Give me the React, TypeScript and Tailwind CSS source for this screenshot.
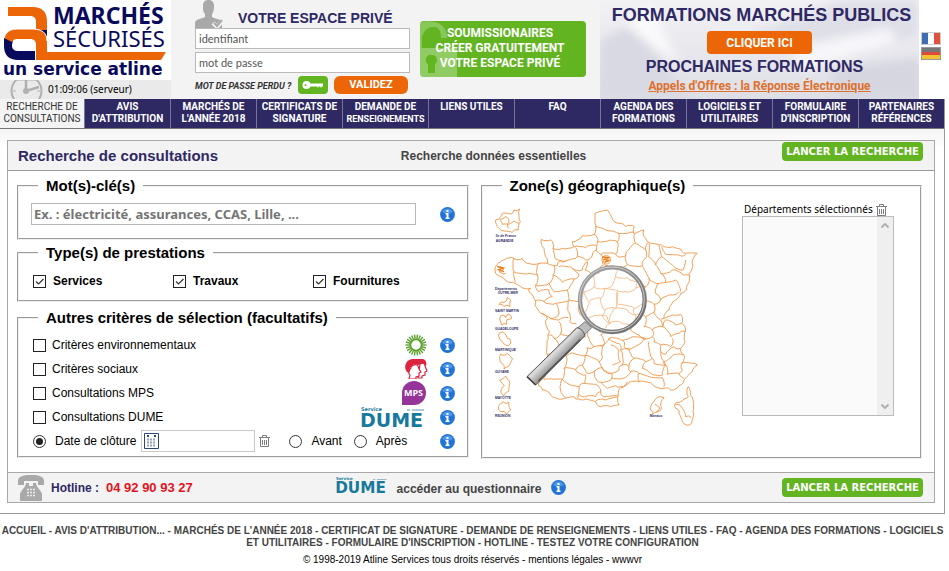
import React from 'react';

type Pt = [number, number];

const OUTLINE =
  '348,55 385,45 400,72 420,85 440,95 466,95 466,118 495,105 500,130 520,145 548,150 580,155 605,162 620,175 655,175 640,205 630,235 628,265 622,285 605,295 590,315 570,345 555,370 580,360 605,358 608,385 620,405 618,440 605,460 615,480 608,505 655,510 640,530 615,555 600,572 575,585 555,580 520,568 480,560 450,562 425,578 418,600 420,630 395,635 365,635 350,620 320,612 300,612 285,605 250,612 215,600 190,585 178,572 195,550 205,480 208,430 212,410 200,385 205,370 185,355 168,330 165,310 150,290 155,280 125,275 100,262 75,250 55,240 50,215 75,195 105,190 130,190 150,205 180,205 205,205 200,185 195,160 187,133 215,135 222,160 250,160 285,155 280,140 310,122 345,118 348,85 348,55';

const BORDERS = [
  '348,95 375,102 400,108 418,115 445,115 466,112',
  '345,118 356,140 385,138 415,140 418,115',
  '356,140 352,165 365,178 410,178 415,140',
  '285,155 320,158 352,152',
  '290,157 295,185 320,195 340,180 352,165',
  '466,118 470,145 500,165 508,142',
  '470,145 440,180 445,208 490,212 500,190 500,165',
  '365,178 370,205 400,212 425,215 445,208',
  '410,178 430,185 440,180',
  '370,188 390,184 392,202 374,204 370,188',
  '222,160 228,190 260,198 290,190 295,185',
  '205,205 235,212 245,198 260,198',
  '240,215 280,220 310,225 325,200',
  '105,190 105,230 150,235 175,240 180,205',
  '55,215 75,222 60,230 80,236',
  '105,230 110,262',
  '175,240 170,270 210,265 222,240 225,212',
  '222,240 250,262 285,252 300,240 280,220',
  '325,200 318,225 340,240 360,235 372,210',
  '340,240 345,275 375,280 400,270 410,245 425,215',
  '375,280 410,285 440,290 470,280 475,258 445,248 410,245',
  '490,212 510,250 500,275 470,280',
  '510,145 508,185 530,210 548,185 540,150',
  '548,185 585,215 612,225 620,195',
  '548,155 560,178 600,180 620,178',
  '530,210 545,235 580,225 612,240 630,240',
  '545,235 560,262 590,255 604,290',
  '510,250 540,265 560,262',
  '540,265 530,295 545,315 580,300 600,290',
  '500,275 498,320 525,328 545,315',
  '170,270 180,290 210,285 220,305 195,320 168,318',
  '210,265 225,290 265,285 285,252',
  '265,285 270,315 305,320 315,290 345,275',
  '270,315 268,350 272,380 292,385',
  '195,320 230,325 238,360 215,370 190,358',
  '230,325 268,318',
  '305,320 300,350 325,375 330,395',
  '315,290 330,320 365,310 375,280',
  '365,310 378,345 410,340 415,290',
  '330,320 318,350 325,375',
  '415,290 418,330 465,340 495,320 498,320',
  '378,345 370,360 392,385 400,352 410,340',
  '325,375 355,362 385,365 395,385 380,400',
  '410,340 445,345 470,360 460,385 425,382 392,385',
  '465,340 470,360 500,365 525,352 525,328',
  '525,352 545,375 555,370',
  '500,365 495,395 520,405 550,395 545,375',
  '212,370 240,375 268,368',
  '240,380 245,415 225,430 208,420',
  '245,415 275,420 290,400',
  '225,430 240,455 230,485 205,478',
  '240,455 262,460 290,440 320,425',
  '330,395 330,430 345,455 375,450 365,420 390,405',
  '460,385 455,405 480,420 500,432 520,425 520,405',
  '555,395 560,375 590,390 608,385',
  '550,395 575,425 600,415 620,410',
  '390,430 425,435 455,428 500,432',
  '365,455 390,430 420,445 425,465 450,462 490,440 500,432',
  '430,435 435,455 450,462 465,490 450,515 430,510 425,465',
  '262,460 262,485 285,475 318,482 325,458 345,455',
  '262,485 255,520 290,525 310,510 318,482',
  '375,450 370,485 360,500 370,520 395,535 420,525 430,510',
  '395,450 420,468 425,500 400,510',
  '318,482 360,500',
  '310,510 325,535 350,525 370,518 398,535 395,555 365,562 350,550 350,525',
  '195,553 225,553 250,553 255,520',
  '250,553 245,585 260,608',
  '250,553 275,570 300,575 295,610',
  '290,525 320,540 315,565 300,575',
  '315,565 350,568 365,590 350,605 320,605 300,598',
  '365,562 385,580 410,572 425,575 445,560',
  '365,590 375,605 415,600',
  '350,618 380,615 418,605',
  '398,548 430,550 455,530 450,515',
  '455,530 480,535 482,560',
  '465,490 500,500 520,490 510,440',
  '500,500 490,520 515,535 550,540 560,510 525,505 520,490',
  '480,535 510,545 550,548 555,575',
  '520,425 525,440 545,450 548,490 560,510',
  '545,450 575,455 580,430',
  '545,470 560,478 585,455 605,460',
  '560,510 555,500 580,482 612,480',
  '560,510 565,538 600,535 615,550',
  '608,505 610,525 600,535',
  // Corsica and the enlarged Paris area
  '628,575 634,600 642,615 642,650 632,690 610,680 600,655 590,640 592,622 615,612 628,605 628,575',
  '590,628 610,640 620,665 636,668',
  '50,75 70,55 95,58 105,45 122,42 124,80 118,105 100,112 75,108 60,100 50,75',
  '62,72 78,65 90,80 88,100',
  '62,72 70,88 88,88 105,78 120,85',
  // Overseas departments
  '60,328 75,322 85,308 95,315 93,335 75,335 60,328',
  '62,372 72,360 80,368 88,358 98,370 84,374 82,388 68,390 62,372',
  '60,415 72,410 85,430 95,440 88,452 70,440 60,415',
  '65,478 85,475 100,490 88,515 75,522 68,505 65,478',
  '62,555 80,543 92,558 88,590 75,602 66,585 76,572 62,555',
  '58,635 72,620 90,622 95,645 82,657 65,650 58,635',
  '515,645 525,620 545,605 555,608 545,630 540,650 522,658 515,645',
  '528,628 542,638 532,650',
];

/** Turns a coarse polyline into an irregular administrative border. */
function border(points: string): string {
  const pts = points.split(' ').map((p) => p.split(',').map(Number) as Pt);
  let d = `M${pts[0][0]} ${pts[0][1]}`;
  for (let i = 1; i < pts.length; i++) {
    const [ax, ay] = pts[i - 1];
    const [bx, by] = pts[i];
    const len = Math.hypot(bx - ax, by - ay) || 1;
    const steps = Math.max(1, Math.round(len / 7));
    for (let s = 1; s < steps; s++) {
      const t = s / steps;
      const n = Math.sin(ax * 12.9 + by * 78.2 + s * 37.7) * 4;
      d += `L${(ax + (bx - ax) * t - ((by - ay) / len) * n).toFixed(1)} ${(ay + (by - ay) * t + ((bx - ax) / len) * n).toFixed(1)}`;
    }
    d += `L${bx} ${by}`;
  }
  return d;
}

const MAP_LABELS: [number, number, string][] = [
  [50, 126, 'Ile de France'],
  [50, 141, 'AGRANDIE'],
  [48, 284, 'Départements'],
  [56, 298, 'OUTRE-MER'],
  [48, 350, 'SAINT MARTIN'],
  [48, 404, 'GUADELOUPE'],
  [48, 467, 'MARTINIQUE'],
  [48, 534, 'GUYANE'],
  [48, 611, 'MAYOTTE'],
  [48, 667, 'REUNION'],
  [512, 665, 'Monaco'],
];

function FranceMap() {
  return (
    <svg viewBox="45 36 615 660" className="h-[220px] w-[205px] shrink-0" role="img" aria-label="Carte des départements">
      <defs>
        <linearGradient id="handle" x1="0" y1="0" x2="1" y2="1">
          <stop offset="0.3" stopColor="#6f6f6f" />
          <stop offset="0.45" stopColor="#e0e0e0" />
          <stop offset="0.58" stopColor="#8b8b8b" />
          <stop offset="0.72" stopColor="#4f4f4f" />
        </linearGradient>
        <linearGradient id="ring" x1="0" y1="0" x2="1" y2="1">
          <stop offset="0" stopColor="#a5a5a5" />
          <stop offset="0.5" stopColor="#8a8a8a" />
          <stop offset="1" stopColor="#666" />
        </linearGradient>
      </defs>
      <g fill="none" stroke="#f0994a" strokeWidth="2.8" strokeLinejoin="round">
        <path d={border(OUTLINE)} />
        {BORDERS.map((b) => (
          <path key={b} d={border(b)} />
        ))}
      </g>
      <path d="M370 186l22 2-18 6 18 2-16 6M55 215l18 4-14 5 16 6" fill="none" stroke="#ee7a10" strokeWidth="4" />
      <g fill="#2f2a66" fontFamily="Liberation Sans, sans-serif" fontWeight="700" fontSize="10">
        {MAP_LABELS.map(([x, y, t]) => (
          <text key={t} x={x} y={y}>{t}</text>
        ))}
      </g>
      <circle cx="400" cy="314" r="94" fill="#fff" fillOpacity="0.35" />
      <path d="M318 380l20 18-22 22-22-20z" fill="#bdbdbd" stroke="#777" strokeWidth="3" />
      <path d="M294 398q18 4 24 24L170 570 144 545z" fill="url(#handle)" stroke="#555" strokeWidth="3" />
      <path d="M286 414L162 538" stroke="#d8d8d8" strokeWidth="5" />
      <path d="M304 434L178 558" stroke="#555" strokeWidth="5" />
      <path d="M144 545l26 25" stroke="#444" strokeWidth="5" />
      <circle cx="400" cy="314" r="97" fill="none" stroke="url(#ring)" strokeWidth="13" />
      <circle cx="399" cy="313" r="97" fill="none" stroke="#cfcfcf" strokeWidth="3" />
    </svg>
  );
}

function Logo() {
  return (
    <svg viewBox="0 0 171 80" className="block h-20 w-[171px]" role="img" aria-label="Marchés Sécurisés">
      <path d="M36 29h11v9c-2-4-6-7-11-8z" fill="#0a0a5c" />
      <path d="M4 38v8c0 9 5 14 14 14h17v-9H19c-5 0-7-2-7-6l1-5z" fill="#0a0a5c" />
      <path d="M8 7h25c9 0 14 5 14 14v9H36v-8c0-4-2-6-6-6H8z" fill="#ec6608" />
      <path d="M4 38c2-6 6-9 13-9h16c9 0 14 4 14 12v11h119l-5 8H36V45c0-4-2-6-6-6H18c-4 0-5 1-6 3z" fill="#ec6608" />
      <path d="M4 38c2-6 6-9 13-9h16c9 0 14 4 14 12" fill="none" stroke="#fff" strokeWidth="1" />
      <g fill="#0a0a5c">
        <text x="53" y="24" fontFamily="Noto Sans, sans-serif" fontWeight="700" fontSize="23">MARCHÉS</text>
        <text x="53" y="47" fontFamily="Noto Sans, sans-serif" fontWeight="400" fontSize="22">SÉCURISÉS</text>
        <text x="3" y="75" fontFamily="DejaVu Sans, sans-serif" fontWeight="700" fontSize="17">un service atline</text>
      </g>
    </svg>
  );
}

function Info() {
  return (
    <button type="button" aria-label="Information" className="block size-[15px] shrink-0">
      <svg viewBox="0 0 15 15" className="size-[15px]">
        <circle cx="7.500" cy="7.500" r="7.400" fill="#2173d6" />
        <path d="M2 5a6 6 0 0 1 11 0q-5 3-11 0z" fill="#4b95ea" />
        <path d="M6.500 3h2v2h-2zM5.500 6h3v4.500h1V12h-4v-1.500h1v-3h-1z" fill="#fff" />
      </svg>
    </button>
  );
}

function Trash() {
  return (
    <button type="button" aria-label="Effacer" className="block h-3 w-[11px] shrink-0">
      <svg viewBox="0 0 11 12" className="h-3 w-[11px]" fill="none" stroke="#7d7d7d">
        <path d="M0 2.500h11M3.500 2V.5h4V2M1.500 3v8.500h8V3M3.500 5v5M5.500 5v5M7.500 5v5" />
      </svg>
    </button>
  );
}

function Dume({ className }: { className: string }) {
  return (
    <svg viewBox="0 0 66 21" className={`overflow-visible ${className}`} role="img" aria-label="Service DUME">
      <g fill="#17799b" fontFamily="DejaVu Sans, sans-serif" fontWeight="700">
        <text x="0" y="4" fontSize="5">Service</text>
        <text x="-1" y="20" fontSize="19">DUME</text>
      </g>
      <path d="M46 3h3M51 3h12" stroke="#9ab9c9" strokeWidth="1.500" />
    </svg>
  );
}

function Check({ label, bold, checked }: { label: string; bold?: boolean; checked?: boolean }) {
  return (
    <label className={bold ? 'flex items-center gap-[7px] font-bold' : 'flex items-center gap-[6px]'}>
      <span className="grid size-[13px] shrink-0 place-items-center">
        <input
          type="checkbox"
          defaultChecked={checked}
          className="peer col-start-1 row-start-1 size-[13px] appearance-none border border-[#222] bg-white"
        />
        <svg viewBox="0 0 13 13" className="pointer-events-none col-start-1 row-start-1 size-[13px] opacity-0 peer-checked:opacity-100">
          <path d="M3 6.500l2.500 2.500L10.500 4" fill="none" stroke="#333" strokeWidth="1.200" />
        </svg>
      </span>
      {label}
    </label>
  );
}

function Radio({ label, checked, className }: { label: string; checked?: boolean; className: string }) {
  return (
    <label className={`flex items-center gap-[9px] whitespace-nowrap ${className}`}>
      <span className="grid size-[13px] shrink-0 place-items-center">
        <input
          type="radio"
          name="date"
          defaultChecked={checked}
          className="peer col-start-1 row-start-1 size-[13px] appearance-none rounded-full border border-[#333] bg-white"
        />
        <span className="pointer-events-none col-start-1 row-start-1 size-[7px] rounded-full bg-[#222] opacity-0 peer-checked:opacity-100" />
      </span>
      {label}
    </label>
  );
}

function Launch() {
  return (
    <button
      type="submit"
      className="h-[19px] w-[141px] shrink-0 whitespace-nowrap rounded bg-[#62b521] text-center font-['DejaVu_Sans',sans-serif] text-[10px] leading-[19px] font-bold text-white"
    >
      LANCER LA RECHERCHE
    </button>
  );
}

const NAV: [string, string][] = [
  ['RECHERCHE DE', 'CONSULTATIONS'],
  ['AVIS', "D'ATTRIBUTION"],
  ['MARCHÉS DE', "L'ANNÉE 2018"],
  ['CERTIFICATS DE', 'SIGNATURE'],
  ['DEMANDE DE', 'RENSEIGNEMENTS'],
  ['LIENS UTILES', ''],
  ['FAQ', ''],
  ['AGENDA DES', 'FORMATIONS'],
  ['LOGICIELS ET', 'UTILITAIRES'],
  ['FORMULAIRE', "D'INSCRIPTION"],
  ['PARTENAIRES', 'RÉFÉRENCES'],
];

const FOOTER = [
  'ACCUEIL',
  "AVIS D'ATTRIBUTION...",
  "MARCHÉS DE L'ANNÉE 2018",
  'CERTIFICAT DE SIGNATURE',
  'DEMANDE DE RENSEIGNEMENTS',
  'LIENS UTILES',
  'FAQ',
  'AGENDA DES FORMATIONS',
  'LOGICIELS ET UTILITAIRES',
  "FORMULAIRE D'INSCRIPTION",
  'HOTLINE',
  'TESTEZ VOTRE CONFIGURATION',
];

const FIELDSET = 'min-w-0 border-2 border-[#efefef] [border-style:groove]';
const LEGEND = 'ml-[19px] px-2 text-[15px] leading-[18px] font-bold text-black';
const LOGIN_INPUT =
  "h-[21px] w-[215px] border border-[#b9b9b9] bg-white px-[3px] font-['Lato',sans-serif] text-[11px] text-[#555] placeholder:text-[#555]";

function Header() {
  return (
    <header className="flex h-[99px] bg-white">
      <div className="w-[171px] shrink-0">
        <Logo />
        <div className="flex h-[19px] items-center gap-1 overflow-hidden bg-[#eaeaea] pl-[10px] font-['Noto_Sans',sans-serif] text-[10px] text-black">
          <svg viewBox="0 0 34 19" className="h-[19px] w-[34px]" fill="none" stroke="#b0b0b0" strokeWidth="2">
            <circle cx="16.500" cy="11" r="15" />
            <path d="M7 -1h20" strokeWidth="3" />
            <path d="M16 11l13-4M16 11V0" strokeWidth="2.500" />
            <circle cx="16" cy="11" r="2" fill="#b0b0b0" />
            <path d="M3 11h3M27 11h3" strokeWidth="1" />
          </svg>
          01:09:06 (serveur)
        </div>
      </div>

      <div className="flex min-w-0 flex-1 bg-[#f3f3f3] pl-6">
        <form className="w-[215px] shrink-0">
          <div className="flex h-7 items-end">
            <svg viewBox="0 0 28 28" className="h-7 w-7" fill="#a9a9a9">
              <path d="M8 6c0-4 2-6 5.500-6S19 2 19 6c0 5-1 7-2 8v3c3 2 10 2 10 6v5H0v-5c0-4 6-4 10-6v-3C8 12 8 10 8 6z" />
              <path d="M18 23l4 4 7-8" fill="none" stroke="#f3f3f3" strokeWidth="4" />
              <path d="M19 23l3 3 5-6" fill="none" stroke="#a9a9a9" strokeWidth="2" />
            </svg>
            <h2 className="flex-1 pl-[15px] text-sm leading-5 font-bold whitespace-nowrap text-[#2e2963]">VOTRE ESPACE PRIVÉ</h2>
          </div>
          <input aria-label="identifiant" placeholder="identifiant" className={`${LOGIN_INPUT} block`} />
          <input aria-label="mot de passe" type="password" placeholder="mot de passe" className={`${LOGIN_INPUT} mt-[3px] block`} />
          <div className="mt-[3px] flex items-center">
            <a href="#perdu" className="min-w-0 flex-1 pt-1 font-['Roboto',sans-serif] text-[9px] font-bold whitespace-nowrap text-[#333] italic">MOT DE PASSE PERDU ?</a>
            <button type="button" aria-label="Clé" className="grid h-[18px] w-[30px] shrink-0 place-items-center rounded bg-[#62b521]">
              <svg viewBox="0 0 22 12" className="h-3 w-[22px]">
                <circle cx="4.500" cy="6" r="4" fill="#fff" />
                <circle cx="3.500" cy="6" r="1" fill="#62b521" />
                <path d="M8 4.500h13v3h-1.500v1h-1v-1h-2v1h-1v-1H8z" fill="#fff" />
              </svg>
            </button>
            <button type="submit" className="mr-[2px] ml-[6px] h-[18px] w-[74px] shrink-0 rounded-md bg-[#ec6608] font-['Roboto',sans-serif] text-[11px] font-bold text-white">VALIDEZ</button>
          </div>
        </form>
        <a href="#inscription" className="relative mt-[21px] ml-[10px] block h-14 w-[166px] shrink-0 overflow-hidden rounded-[4px] bg-[#62b521] pt-[5px] text-center font-['Roboto',sans-serif] text-xs leading-[15px] font-bold text-white">
          <svg viewBox="0 0 37 56" className="absolute top-0 left-0 h-14 w-[37px]">
            <path d="M0 2c4-2 10-2 14-1 8 1 13 7 13 16h-6c0-9-3-11-8-11-6 0-9 4-11 10v11H0z" fill="#fff" fillOpacity=".25" />
            <path d="M0 27h37v29H0z" fill="#fff" fillOpacity=".3" />
            <path d="M12 34a5 5 0 0 1 3 9v9H8v-9a5 5 0 0 1 4-9z" fill="#62b521" />
          </svg>
          <span className="relative block pr-[6px]">SOUMISSIONAIRES<br />CRÉER GRATUITEMENT<br />VOTRE ESPACE PRIVÉ</span>
        </a>
      </div>

      <section className="relative flex w-[319px] shrink-0 flex-col items-center overflow-hidden bg-linear-to-b from-[#f2f2f5] to-[#dedee6] font-bold text-[#2e2963]">
        <svg viewBox="0 0 319 99" className="absolute inset-0 size-full" preserveAspectRatio="none">
          <defs>
            <filter id="soft"><feGaussianBlur stdDeviation="5" /></filter>
          </defs>
          <g filter="url(#soft)">
            <path d="M0 40L30 25 60 60 90 99H0z" fill="#d9d9e3" />
            <path d="M25 25l25-20 30 60z" fill="#fafafc" />
            <path d="M150 35L240 0h79v35l-90 20z" fill="#dfdfe8" />
            <path d="M190 48L290 28l5 14-90 28z" fill="#f7f7fa" />
            <path d="M230 70l89-12v41h-80z" fill="#d6d6e1" />
          </g>
        </svg>
        <h2 className="relative mt-[4px] pl-[4px] text-lg leading-[22px] whitespace-nowrap">FORMATIONS MARCHÉS PUBLICS</h2>
        <button type="button" className="relative mt-[5px] h-[23px] w-[105px] rounded bg-[#ec6608] font-['Roboto',sans-serif] text-xs font-bold text-white">CLIQUER ICI</button>
        <h3 className="relative mt-[4px] pr-[10px] text-base leading-[18px] whitespace-nowrap">PROCHAINES FORMATIONS</h3>
        <a href="#appels" className="relative mt-[3px] font-['Roboto',sans-serif] text-xs leading-[15px] whitespace-nowrap text-[#e0702c] underline">Appels d&apos;Offres : la Réponse Électronique</a>
      </section>

      <div className="flex w-[30px] shrink-0 flex-col gap-[2px] pt-8 pl-[2px]">
        <button type="button" aria-label="Français" className="flex h-[13px] w-5 border border-[#ccc]">
          <span className="h-full flex-1 bg-[#3c6db5]" />
          <span className="h-full flex-1 bg-white" />
          <span className="h-full flex-1 bg-[#e0523f]" />
        </button>
        <button type="button" aria-label="Deutsch" className="flex h-[13px] w-5 flex-col border border-[#999]">
          <span className="w-full flex-1 bg-[#777]" />
          <span className="w-full flex-1 bg-[#e04a3c]" />
          <span className="w-full flex-1 bg-[#f2c230]" />
        </button>
      </div>
    </header>
  );
}

function SearchCriteria() {
  return (
    <div className="flex min-w-0 flex-col">
      <fieldset className={`${FIELDSET} h-[63px]`}>
        <legend className={LEGEND}>Mot(s)-clé(s)</legend>
        <div className="flex items-center gap-6 pt-[8px] pr-3 pl-3">
          <input
            aria-label="Mots-clés"
            placeholder="Ex. : électricité, assurances, CCAS, Lille, ..."
            className="h-[22px] min-w-0 flex-1 border border-[#b9b9b9] px-[2px] font-['Noto_Sans',sans-serif] text-[13px] font-bold placeholder:text-[#757575]"
          />
          <Info />
        </div>
      </fieldset>
      <fieldset className={`${FIELDSET} mt-1 h-[58px]`}>
        <legend className={LEGEND}>Type(s) de prestations</legend>
        <div className="grid grid-cols-[140px_140px_auto] pt-[11px] pl-[14px] text-xs leading-4 text-black">
          <Check label="Services" bold checked />
          <Check label="Travaux" bold checked />
          <Check label="Fournitures" bold checked />
        </div>
      </fieldset>
      <fieldset className={`${FIELDSET} mt-[7px] h-[149px] text-xs text-black`}>
        <legend className={LEGEND}>Autres critères de sélection (facultatifs)</legend>
        <div className="grid auto-rows-[24px] pt-[6px] pr-3 pl-[14px]">
          <div className="flex items-center justify-between">
            <Check label="Critères environnementaux" />
            <span className="flex items-center gap-[13px]">
              <svg viewBox="-11 -11 22 22" className="size-[22px]" stroke="#5aa02c" strokeWidth="1.400">
                {Array.from({ length: 22 }, (_, i) => {
                  const a = (i / 22) * Math.PI * 2;
                  return <path key={i} d={`M${Math.cos(a) * 5} ${Math.sin(a) * 5}L${Math.cos(a) * 10.5} ${Math.sin(a) * 10.5}`} />;
                })}
                <circle r="5.500" fill="#fff" strokeWidth="1.500" />
              </svg>
              <Info />
            </span>
          </div>
          <div className="flex items-center justify-between">
            <Check label="Critères sociaux" />
            <span className="flex items-center gap-3">
              <svg viewBox="0 0 24 20" className="h-5 w-6">
                <path d="M3 13C-1 8 2 1 8 0h11c3 1 4 4 3 7l-4-3-3 2-5-1-4 4-1 5z" fill="#dc2340" />
                <g fill="#fff" stroke="#dc2340" strokeWidth="1.200">
                  <path d="M16 5c3-2 5 0 5 2l2 5-2 1v3l-3 1v2h-4z" />
                  <path d="M7 8c2-3 6-3 7-1l1 3 2 3-2 1v3l-3 1v2H5l1-4c-2-1-1-5 1-7z" />
                </g>
              </svg>
              <Info />
            </span>
          </div>
          <div className="flex items-center justify-between">
            <Check label="Consultations MPS" />
            <span className="flex items-center gap-[14px]">
              <span className="grid size-6 place-items-center rounded-full rounded-bl-none bg-[#97349a] font-['Open_Sans',sans-serif] text-[9px] font-bold text-white">MPS</span>
              <Info />
            </span>
          </div>
          <div className="flex items-center justify-between">
            <Check label="Consultations DUME" />
            <span className="flex items-center gap-[13px]">
              <Dume className="h-[21px] w-[66px]" />
              <Info />
            </span>
          </div>
          <div className="flex items-center">
            <Radio label="Date de clôture" checked className="" />
            <span className="ml-[5px] flex h-[22px] w-[114px] items-center border border-[#c9c9c9] bg-white pl-[2px]">
              <svg viewBox="0 0 15 16" className="h-4 w-[15px] shrink-0">
                <path d="M.5.500h14v15H.5z" fill="#fff" stroke="#2d4672" />
                <path d="M3 3h2M10 3h2" stroke="#2d4672" strokeWidth="2" />
                <path d="M3 6.500h9M3 9.500h9M3 12.500h9" stroke="#8fa3c4" strokeWidth="2" strokeDasharray="2 1" />
              </svg>
              <input aria-label="Date" className="h-full min-w-0 flex-1 px-1" />
            </span>
            <span className="ml-1"><Trash /></span>
            <Radio label="Avant" className="ml-[19px]" />
            <Radio label="Après" className="ml-3" />
            <span className="ml-auto"><Info /></span>
          </div>
        </div>
      </fieldset>
    </div>
  );
}

export default function App() {
  return (
    <div className="min-h-full bg-white font-['Liberation_Sans',Arial,sans-serif]">
      <Header />
      <div className="mr-1 border-r border-b border-[#999] bg-white">
        <nav className="grid h-[30px] grid-cols-[84fr_repeat(10,86fr)] border-b border-[#777] bg-[#2e2963] font-['Roboto',sans-serif] text-[10px] leading-3 font-bold text-white">
          {NAV.map(([a, b], i) => (
            <a
              key={a}
              href={`#nav${i}`}
              className={
                i === 0
                  ? 'min-w-0 bg-[#f4f4f4] pt-[2px] text-center font-normal whitespace-nowrap text-[#333]'
                  : 'min-w-0 border-l border-[#77749a] pt-[2px] text-center whitespace-nowrap'
              }
            >
              {a}
              {b && <br />}
              {b.length > 13 ? <span className="text-[9px]">{b}</span> : b}
            </a>
          ))}
        </nav>

        <main className="bg-linear-to-b from-[#f4f4f4] from-0% to-white to-5% pt-[11px] pr-[9px] pb-[10px] pl-[7px]">
          <form className="border border-[#a8a8a8] bg-white">
            <div className="grid h-[30px] grid-cols-[382fr_auto_336fr] items-center border-b border-[#999] bg-[#f3f3f3] pr-[11px] pl-[10px]">
              <h1 className="pt-[2px] text-[15px] font-bold whitespace-nowrap text-[#2e2963]">Recherche de consultations</h1>
              <a href="#essentielles" className="text-xs font-bold whitespace-nowrap text-[#444]">Recherche données essentielles</a>
              <span className="mb-2 flex justify-end"><Launch /></span>
            </div>

            <div className="grid grid-cols-[451fr_441fr] gap-3 pt-[6px] pr-3 pb-[13px] pl-[9px]">
              <SearchCriteria />
              <fieldset className={`${FIELDSET} h-[282px]`}>
                <legend className={LEGEND}>Zone(s) géographique(s)</legend>
                <div className="flex justify-between pt-[8px] pr-[26px] pl-[11px]">
                  <div className="pt-[4px]"><FranceMap /></div>
                  <div className="w-[152px]">
                    <div className="flex items-center gap-[3px] pl-[2px] font-['Noto_Sans',sans-serif] text-[10px] leading-[13px] whitespace-nowrap text-black">
                      <label htmlFor="departements">Départements sélectionnés</label>
                      <Trash />
                    </div>
                    <div className="flex h-[200px] border border-[#bbb] bg-[#fafafa]">
                      <select id="departements" multiple className="min-w-0 flex-1 appearance-none overflow-hidden bg-transparent" />
                      <div className="flex w-4 flex-col items-center justify-between bg-[#efefef] py-[6px]">
                        <svg viewBox="0 0 8 5" className="h-[5px] w-2" fill="none" stroke="#b0b0b0" strokeWidth="2"><path d="M.5 4.500L4 1l3.500 3.500" /></svg>
                        <svg viewBox="0 0 8 5" className="h-[5px] w-2" fill="none" stroke="#b0b0b0" strokeWidth="2"><path d="M.5.500L4 4 7.500.500" /></svg>
                      </div>
                    </div>
                  </div>
                </div>
              </fieldset>
            </div>

            <div className="grid h-[30px] grid-cols-[317fr_auto_356fr] items-center border-t border-[#a8a8a8] bg-[#f3f3f3] pr-[11px] pl-[10px]">
              <div className="flex items-center gap-[7px] text-xs font-bold whitespace-nowrap text-[#2e2963]">
                <svg viewBox="0 0 26 26" className="size-[26px]" fill="#a9a9a9">
                  <path d="M0 10V5c1-7 25-7 26 0v5h-6V6H6v4z" />
                  <path d="M8 8h3v3h4V8h3c0 4 5 7 6 11v7H2v-7c1-4 6-7 6-11z" />
                  <path d="M9 14.500h8M9 17.500h8M9 20.500h8" stroke="#eee" strokeWidth="1.500" strokeDasharray="2 1" />
                </svg>
                Hotline : <strong className="text-[13px] text-[#e2141c]">04 92 90 93 27</strong>
              </div>
              <div className="flex items-center gap-2 text-xs font-bold text-[#444]">
                <Dume className="mb-1 h-[17px] w-[53px]" />
                <a href="#questionnaire" className="pt-[3px] pr-[2px] whitespace-nowrap">accéder au questionnaire</a>
                <Info />
              </div>
              <span className="flex justify-end"><Launch /></span>
            </div>
          </form>
        </main>
      </div>

      <footer className="pt-[11px] pr-1 text-center text-[10px] leading-3 text-[#444]">
        <p className="font-bold">
          {FOOTER.map((t, i) => (
            <React.Fragment key={t}>
              {i > 0 && <span> - </span>}
              <a href={`#f${i}`}>
                {t.split(' ').map((word, w) => (
                  <React.Fragment key={word}>
                    {w > 0 && <span> </span>}
                    <span>{word}</span>
                  </React.Fragment>
                ))}
              </a>
            </React.Fragment>
          ))}
        </p>
        <p className="mt-[5px] text-black">
          © 1998-2019 Atline Services tous droits réservés - <a href="#mentions">mentions légales</a> - <a href="#wwwvr">wwwvr</a>
        </p>
      </footer>
    </div>
  );
}
